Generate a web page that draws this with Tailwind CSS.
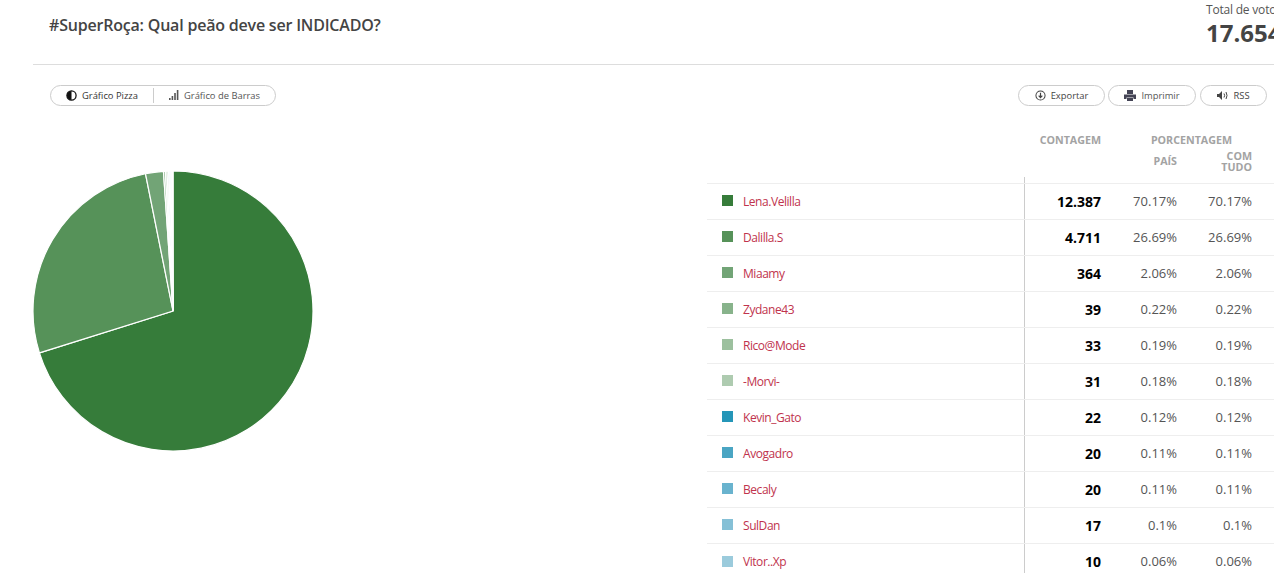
<!DOCTYPE html>
<html lang="pt-BR">
<head>
    <meta charset="UTF-8">
    <meta name="viewport" content="width=device-width, initial-scale=1.0">
    <title>#SuperRoça: Qual peão deve ser INDICADO?</title>
    <script src="https://cdn.jsdelivr.net/npm/@tailwindcss/browser@4"></script>
</head>
<body class="bg-white w-[1274px] h-[580px] overflow-hidden font-['Open_Sans',sans-serif] text-[#444]">

    <!-- Cabeçalho -->
    <header class="ml-[33px] h-[65px] border-b border-[#ddd] flex justify-between">
        <h1 class="pl-4 pt-[14px] text-[16px] tracking-[-0.2px] leading-[22px] font-semibold text-[#444]">#SuperRoça: Qual peão deve ser INDICADO?</h1>
        <div class="w-[68px] pt-[2px] whitespace-nowrap">
            <p class="text-[12px] tracking-[-0.2px] leading-4 text-[#555]">Total de votos</p>
            <p class="text-[24px] leading-[30px] font-bold text-[#444]">17.654</p>
        </div>
    </header>

    <!-- Barra de ações -->
    <div class="flex justify-between items-center h-[21px] mt-5 ml-[50px] mr-[7px] text-[9.4px] text-[#444]">
        <div class="flex items-center w-[226px] h-[21px] border border-[#ccc] rounded-full">
            <span class="flex items-center gap-[5px] pl-[15px] pt-px w-[103px] h-[15px] border-r border-[#ccc] text-[#333]">
                <svg class="w-[11px] h-[11px] -mt-px" viewBox="0 0 12 12"><circle cx="6" cy="6" r="5" fill="#fff" stroke="#111" stroke-width="1.4"/><path d="M6 1a5 5 0 0 1 0 10z" fill="#111" transform="rotate(180 6 6)"/></svg>
                Gráfico Pizza
            </span>
            <span class="flex items-center gap-[5px] pl-[15px] pt-px text-[#555]">
                <svg class="w-[10px] h-[10px] -mt-px" viewBox="0 0 10 10" fill="#555"><rect x="0" y="8" width="1.6" height="2"/><rect x="2.6" y="6" width="1.6" height="4"/><rect x="5.2" y="3" width="1.6" height="7"/><rect x="7.8" y="0" width="1.6" height="10"/></svg>
                Gráfico de Barras
            </span>
        </div>
        <div class="flex items-center">
            <span class="flex items-center justify-center gap-[5px] w-[87px] h-[21px] pt-px border border-[#ccc] rounded-full">
                <svg class="w-[11px] h-[11px] -mt-px" viewBox="0 0 12 12" fill="none" stroke="#444"><circle cx="6" cy="6" r="5" stroke-width="1.1"/><path d="M6 3v5M4 6.2 6 8.4l2-2.2" stroke-width="1.3"/></svg>
                Exportar
            </span>
            <span class="flex items-center justify-center gap-[5px] w-[88px] h-[21px] pt-px ml-[3px] border border-[#ccc] rounded-full text-[#555]">
                <svg class="w-[12px] h-[11px] -mt-px" viewBox="0 0 12 11" fill="#445"><rect x="3" y="0" width="6" height="4"/><path d="M0 4.500h12V9H9.500V7.500h-7V9H0z"/><rect x="3" y="8" width="6" height="3"/></svg>
                Imprimir
            </span>
            <span class="flex items-center justify-center gap-[5px] w-[67px] h-[21px] pt-px ml-[4px] border border-[#ccc] rounded-full">
                <svg class="w-[11px] h-[9px] -mt-px" viewBox="0 0 11 9" fill="#444"><path d="M0 3h2l3-3v9L2 6H0z"/><path d="M7 2.500q1.300 2 0 4M9 1q2 3.500 0 7" fill="none" stroke="#444"/></svg>
                RSS
            </span>
        </div>
    </div>

    <main class="flex ml-[33px]">
        <!-- Gráfico -->
        <div class="w-[674px] pt-[65px]">
            <svg id="pizza" width="280" height="280" viewBox="0 0 280 280"></svg>
        </div>

        <!-- Tabela -->
        <div class="w-[567px] pt-[27px] text-[12px]">
            <div class="grid grid-cols-[318px_76px_76px_75px] h-[44px] font-bold text-[#a3a3a3] text-[10.7px] leading-[11px] text-right">
                <div></div>
                <div class="pt-[2px]">CONTAGEM</div>
                <div class="col-span-2">
                    <div class="pt-[2px] pr-[20px]">PORCENTAGEM</div>
                    <div class="grid grid-cols-[76px_75px]">
                        <span class="pt-[10px]">PAÍS</span>
                        <span class="pt-[5px]">COM<br>TUDO</span>
                    </div>
                </div>
            </div>
            <div class="ml-[317px] w-px h-[6px] bg-[#ccc]"></div>

            <div class="grid grid-cols-[318px_76px_76px_75px] h-[36px] border-t border-[#eee] items-center text-right">
                <div class="flex items-center h-full border-r border-[#ccc] pl-[15px] text-left text-[12px] tracking-[-0.45px] text-[#c0334d]"><span class="w-[11px] h-[11px] mr-[10px] -mt-[2px] bg-[#367c3a]"></span>Lena.Velilla</div>
                <div class="text-[14px] font-bold text-black">12.387</div>
                <div class="text-[#555] text-[13px]">70.17%</div>
                <div class="text-[#555] text-[13px]">70.17%</div>
            </div>
            <div class="grid grid-cols-[318px_76px_76px_75px] h-[36px] border-t border-[#eee] items-center text-right">
                <div class="flex items-center h-full border-r border-[#ccc] pl-[15px] text-left text-[12px] tracking-[-0.45px] text-[#c0334d]"><span class="w-[11px] h-[11px] mr-[10px] -mt-[2px] bg-[#569259]"></span>Dalilla.S</div>
                <div class="text-[14px] font-bold text-black">4.711</div>
                <div class="text-[#555] text-[13px]">26.69%</div>
                <div class="text-[#555] text-[13px]">26.69%</div>
            </div>
            <div class="grid grid-cols-[318px_76px_76px_75px] h-[36px] border-t border-[#eee] items-center text-right">
                <div class="flex items-center h-full border-r border-[#ccc] pl-[15px] text-left text-[12px] tracking-[-0.45px] text-[#c0334d]"><span class="w-[11px] h-[11px] mr-[10px] -mt-[2px] bg-[#72a476]"></span>Miaamy</div>
                <div class="text-[14px] font-bold text-black">364</div>
                <div class="text-[#555] text-[13px]">2.06%</div>
                <div class="text-[#555] text-[13px]">2.06%</div>
            </div>
            <div class="grid grid-cols-[318px_76px_76px_75px] h-[36px] border-t border-[#eee] items-center text-right">
                <div class="flex items-center h-full border-r border-[#ccc] pl-[15px] text-left text-[12px] tracking-[-0.45px] text-[#c0334d]"><span class="w-[11px] h-[11px] mr-[10px] -mt-[2px] bg-[#88b38b]"></span>Zydane43</div>
                <div class="text-[14px] font-bold text-black">39</div>
                <div class="text-[#555] text-[13px]">0.22%</div>
                <div class="text-[#555] text-[13px]">0.22%</div>
            </div>
            <div class="grid grid-cols-[318px_76px_76px_75px] h-[36px] border-t border-[#eee] items-center text-right">
                <div class="flex items-center h-full border-r border-[#ccc] pl-[15px] text-left text-[12px] tracking-[-0.45px] text-[#c0334d]"><span class="w-[11px] h-[11px] mr-[10px] -mt-[2px] bg-[#9cc09e]"></span>Rico@Mode</div>
                <div class="text-[14px] font-bold text-black">33</div>
                <div class="text-[#555] text-[13px]">0.19%</div>
                <div class="text-[#555] text-[13px]">0.19%</div>
            </div>
            <div class="grid grid-cols-[318px_76px_76px_75px] h-[36px] border-t border-[#eee] items-center text-right">
                <div class="flex items-center h-full border-r border-[#ccc] pl-[15px] text-left text-[12px] tracking-[-0.45px] text-[#c0334d]"><span class="w-[11px] h-[11px] mr-[10px] -mt-[2px] bg-[#aecbb0]"></span>-Morvi-</div>
                <div class="text-[14px] font-bold text-black">31</div>
                <div class="text-[#555] text-[13px]">0.18%</div>
                <div class="text-[#555] text-[13px]">0.18%</div>
            </div>
            <div class="grid grid-cols-[318px_76px_76px_75px] h-[36px] border-t border-[#eee] items-center text-right">
                <div class="flex items-center h-full border-r border-[#ccc] pl-[15px] text-left text-[12px] tracking-[-0.45px] text-[#c0334d]"><span class="w-[11px] h-[11px] mr-[10px] -mt-[2px] bg-[#2596b8]"></span>Kevin_Gato</div>
                <div class="text-[14px] font-bold text-black">22</div>
                <div class="text-[#555] text-[13px]">0.12%</div>
                <div class="text-[#555] text-[13px]">0.12%</div>
            </div>
            <div class="grid grid-cols-[318px_76px_76px_75px] h-[36px] border-t border-[#eee] items-center text-right">
                <div class="flex items-center h-full border-r border-[#ccc] pl-[15px] text-left text-[12px] tracking-[-0.45px] text-[#c0334d]"><span class="w-[11px] h-[11px] mr-[10px] -mt-[2px] bg-[#4aa5c3]"></span>Avogadro</div>
                <div class="text-[14px] font-bold text-black">20</div>
                <div class="text-[#555] text-[13px]">0.11%</div>
                <div class="text-[#555] text-[13px]">0.11%</div>
            </div>
            <div class="grid grid-cols-[318px_76px_76px_75px] h-[36px] border-t border-[#eee] items-center text-right">
                <div class="flex items-center h-full border-r border-[#ccc] pl-[15px] text-left text-[12px] tracking-[-0.45px] text-[#c0334d]"><span class="w-[11px] h-[11px] mr-[10px] -mt-[2px] bg-[#69b3ce]"></span>Becaly</div>
                <div class="text-[14px] font-bold text-black">20</div>
                <div class="text-[#555] text-[13px]">0.11%</div>
                <div class="text-[#555] text-[13px]">0.11%</div>
            </div>
            <div class="grid grid-cols-[318px_76px_76px_75px] h-[36px] border-t border-[#eee] items-center text-right">
                <div class="flex items-center h-full border-r border-[#ccc] pl-[15px] text-left text-[12px] tracking-[-0.45px] text-[#c0334d]"><span class="w-[11px] h-[11px] mr-[10px] -mt-[2px] bg-[#85c0d6]"></span>SulDan</div>
                <div class="text-[14px] font-bold text-black">17</div>
                <div class="text-[#555] text-[13px]">0.1%</div>
                <div class="text-[#555] text-[13px]">0.1%</div>
            </div>
            <div class="grid grid-cols-[318px_76px_76px_75px] h-[36px] border-t border-[#eee] items-center text-right">
                <div class="flex items-center self-start h-[29px] pt-[7px] border-r border-[#ccc] pl-[15px] text-left text-[12px] tracking-[-0.45px] text-[#c0334d]"><span class="w-[11px] h-[11px] mr-[10px] -mt-[2px] bg-[#9bcbdc]"></span>Vitor..Xp</div>
                <div class="text-[14px] font-bold text-black">10</div>
                <div class="text-[#555] text-[13px]">0.06%</div>
                <div class="text-[#555] text-[13px]">0.06%</div>
            </div>
        </div>
    </main>

    <script>
        // Fatias da pizza, na ordem da tabela
        const fatias = [
            [12387, '#367c3a'], [4711, '#569259'], [364, '#72a476'], [39, '#88b38b'],
            [33, '#9cc09e'], [31, '#aecbb0'], [22, '#2596b8'], [20, '#4aa5c3'],
            [20, '#69b3ce'], [17, '#85c0d6'], [10, '#9bcbdc']
        ];
        const total = fatias.reduce((s, f) => s + f[0], 0);
        const pizza = document.getElementById('pizza');
        let acumulado = 0;
        fatias.forEach(([valor, cor]) => {
            const a0 = acumulado / total * 2 * Math.PI;
            acumulado += valor;
            const a1 = acumulado / total * 2 * Math.PI;
            const ponto = a => (140 + 140 * Math.sin(a)).toFixed(2) + ' ' + (140 - 140 * Math.cos(a)).toFixed(2);
            const grande = a1 - a0 > Math.PI ? 1 : 0;
            const p = document.createElementNS('http://www.w3.org/2000/svg', 'path');
            p.setAttribute('d', `M140 140L${ponto(a0)}A140 140 0 ${grande} 1 ${ponto(a1)}Z`);
            p.setAttribute('fill', cor);
            p.setAttribute('stroke', '#fff');
            p.setAttribute('stroke-width', '1.2');
            pizza.appendChild(p);
        });
    </script>
</body>
</html>
